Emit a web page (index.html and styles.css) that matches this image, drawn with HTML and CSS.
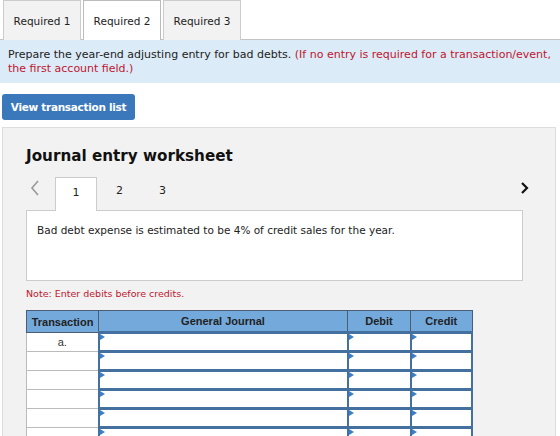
FILE: index.html
```html
<!DOCTYPE html>
<html>

<head>
  <meta name="viewport" content="width=device-width,initial-scale=1">
  <link rel="stylesheet" href="styles.css">
</head>

<body>
  <div class="tabs">
    <button class="tab">Required 1</button>
    <button class="tab active">Required 2</button>
    <button class="tab">Required 3</button>
  </div>

  <!-- Question prompt -->
  <p class="prompt">Prepare the year-end adjusting entry for bad debts. <span class="hint">(If no entry is required for a transaction/event,</span> <span class="hint">the first account field.)</span></p>

  <button class="view-btn">View transaction list</button>

  <div class="worksheet">
    <h2 class="ws-title">Journal entry worksheet</h2>

    <div class="ws-nav">
      <span class="arrow prev">
        <svg width="10" height="16" viewBox="0 0 10 16"><path d="M8 1 L2 8 L8 15" fill="none" stroke="#999" stroke-width="1.6"/></svg>
      </span>
      <span class="step current">1</span>
      <span class="step">2</span>
      <span class="step">3</span>
      <span class="arrow next">
        <svg width="9" height="12" viewBox="0 0 9 12"><path d="M2 1 L7 6 L2 11" fill="none" stroke="#111" stroke-width="2.2"/></svg>
      </span>
    </div>

    <div class="ws-desc">Bad debt expense is estimated to be 4% of credit sales for the year.</div>

    <p class="note">Note: Enter debits before credits.</p>

    <table class="journal">
      <colgroup>
        <col class="c-trans">
        <col class="c-gj">
        <col class="c-amt">
        <col>
      </colgroup>
      <thead>
        <tr>
          <th>Transaction</th>
          <th>General Journal</th>
          <th>Debit</th>
          <th>Credit</th>
        </tr>
      </thead>
      <tbody>
        <tr><td class="trans">a.</td><td class="inp"></td><td class="inp"></td><td class="inp"></td></tr>
        <tr><td class="trans"></td><td class="inp"></td><td class="inp"></td><td class="inp"></td></tr>
        <tr><td class="trans"></td><td class="inp"></td><td class="inp"></td><td class="inp"></td></tr>
        <tr><td class="trans"></td><td class="inp"></td><td class="inp"></td><td class="inp"></td></tr>
        <tr><td class="trans"></td><td class="inp"></td><td class="inp"></td><td class="inp"></td></tr>
        <tr><td class="trans"></td><td class="inp"></td><td class="inp"></td><td class="inp"></td></tr>
      </tbody>
    </table>
  </div>
</body>

</html>
```

FILE: styles.css
```css
/* Page */

body {
  margin: 0;
  font-family: "DejaVu Sans", Verdana, sans-serif;
  color: #222;
  background: #fff;
}

/* Required tabs */

.tabs {
  display: flex;
  gap: 2px;
  padding-left: 3px;
  height: 39px;
  border-bottom: 1px solid #c4c4c4;
}

.tabs .tab {
  width: 78px;
  height: 40px;
  margin: 0;
  padding: 0;
  border: 1px solid #ccc;
  border-bottom: none;
  background-color: #f2f2f2;
  font-family: inherit;
  font-size: 10.5px;
  color: #222;
}

.tabs .tab.active {
  background-color: #fff;
  border-color: #bbb;
  position: relative;
  z-index: 1;
}

/* Prompt */

.prompt {
  margin: 0;
  background-color: #dbebf7;
  padding: 8px 4px 7px 8px;
  font-size: 11px;
  line-height: 14px;
  height: 28px;
}

.hint {
  color: #c0162f;
}

.view-btn {
  display: block;
  margin: 11px 0 0 2px;
  width: 133px;
  height: 26px;
  border: none;
  border-radius: 3px;
  background-color: #3a78bb;
  color: #fff;
  font-family: inherit;
  font-weight: bold;
  font-size: 10.5px;
  letter-spacing: -0.3px;
}

/* Worksheet panel */

.worksheet {
  margin: 7px 0 0 2px;
  width: 554px;
  height: 320px;
  background-color: #f2f2f2;
  border: 1px solid #ddd;
  box-sizing: border-box;
  padding: 0 0 0 23px;
}

.ws-title {
  margin: 19px 0 0;
  font-size: 15.2px;
  line-height: 18px;
  color: #111;
}

.ws-nav {
  display: flex;
  align-items: flex-end;
  margin-top: 11px;
  height: 34px;
  width: 497px;
}

.arrow {
  align-self: flex-start;
  display: flex;
}

.arrow svg {
  display: block;
}

.prev {
  width: 29px;
  padding: 4px 0 0 4px;
  box-sizing: border-box;
}

.next {
  margin-left: auto;
  margin-right: -6px;
  padding-top: 6px;
}

.step {
  width: 43px;
  height: 34px;
  line-height: 30px;
  text-align: center;
  font-size: 11px;
  box-sizing: border-box;
}

.step.current {
  width: 42px;
  margin-right: 1px;
  background-color: #fff;
  border: 1px solid #ccc;
  border-bottom: none;
  position: relative;
  top: 1px;
}

.ws-desc {
  width: 497px;
  height: 71px;
  box-sizing: border-box;
  background-color: #fff;
  border: 1px solid #ccc;
  padding: 12px 10px;
  font-size: 10.5px;
  line-height: 14px;
}

.note {
  margin: 7px 0 0;
  font-size: 9.5px;
  color: #c0162f;
}

/* Journal table */

.journal {
  margin-top: 11px;
  width: 447px;
  table-layout: fixed;
  border-collapse: collapse;
  font-family: "Liberation Sans", Arial, sans-serif;
  font-size: 11px;
}

.c-trans {
  width: 72px;
}

.c-gj {
  width: 249px;
}

.c-amt {
  width: 63px;
}

.journal th {
  background-color: #74a9dc;
  border: 1px solid #4a5d73;
  height: 20px;
  padding: 0;
  font-weight: bold;
  color: #222;
}

.journal td {
  height: 16px;
  padding: 0;
  background-color: #fff;
}

.journal td.trans {
  border: 1px solid #bbb;
  text-align: center;
  color: #333;
}

.journal td.inp {
  border: 2px solid #44709f;
  border-top-width: 3px;
  position: relative;
}

.journal td.inp::before {
  content: "";
  position: absolute;
  left: 0;
  top: 0;
  border-left: 5px solid #3d7fc6;
  border-top: 3px solid transparent;
  border-bottom: 3px solid transparent;
}
```
